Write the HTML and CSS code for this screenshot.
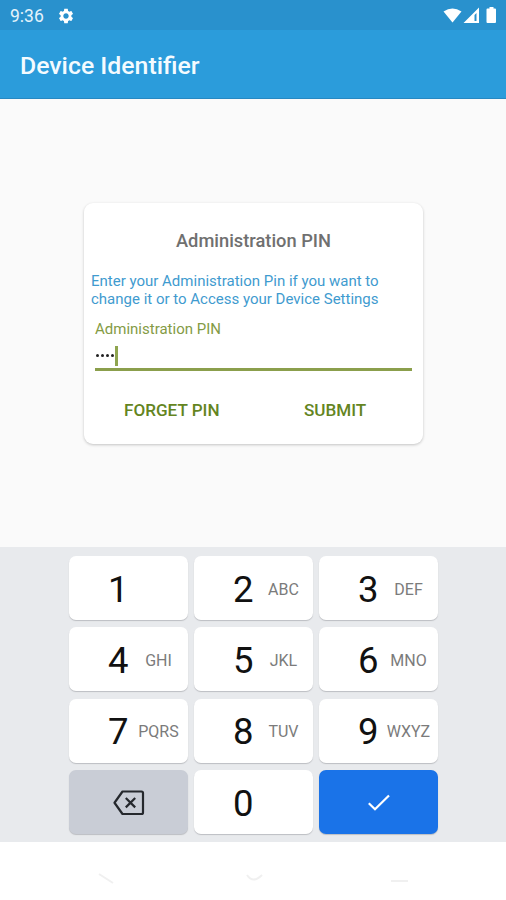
FILE: index.html
```html
<!DOCTYPE html>
<html lang="en">
<head>
<meta charset="utf-8">
<title>Device Identifier</title>
<link rel="stylesheet" href="styles.css">
</head>
<body>

<div class="statusbar">
	<span class="clock">9:36</span>
	<svg class="gear" width="18" height="18" viewBox="0 0 24 24"><path fill="#fff" d="M19.14 12.94c.04-.3.06-.61.06-.94 0-.32-.02-.64-.07-.94l2.03-1.58c.18-.14.23-.41.12-.61l-1.92-3.32c-.12-.22-.37-.29-.59-.22l-2.39.96c-.5-.38-1.03-.7-1.62-.94l-.36-2.54c-.04-.24-.24-.41-.48-.41h-3.84c-.24 0-.43.17-.47.41l-.36 2.54c-.59.24-1.13.57-1.62.94l-2.39-.96c-.22-.08-.47 0-.59.22L2.74 8.87c-.12.21-.08.47.12.61l2.03 1.58c-.05.3-.09.63-.09.94s.02.64.07.94l-2.03 1.58c-.18.14-.23.41-.12.61l1.92 3.32c.12.22.37.29.59.22l2.39-.96c.5.38 1.03.7 1.62.94l.36 2.54c.05.24.24.41.48.41h3.84c.24 0 .44-.17.47-.41l.36-2.54c.59-.24 1.13-.56 1.62-.94l2.39.96c.22.08.47 0 .59-.22l1.92-3.32c.12-.22.07-.47-.12-.61l-2.01-1.58zM12 15.6c-1.98 0-3.6-1.62-3.6-3.6s1.62-3.6 3.6-3.6 3.6 1.62 3.6 3.6-1.62 3.6-3.6 3.6z"/></svg>
	<svg class="signals" width="56" height="18" viewBox="0 0 56 18">
		<path fill="#fff" d="M0.5 4.500Q9.500-1.500 18.500 4.500L9.500 15.500z"/>
		<path fill="#fff" fill-rule="evenodd" d="M36 0.500V16H20.500zM31.500 8L33.500 6V14H31.500z"/>
		<path fill="#fff" d="M46.500 0h4v1.500h1.500q1 0 1 1V15q0 1-1 1h-7.500q-1 0-1-1V2.500q0-1 1-1h2z"/>
	</svg>
</div>

<div class="appbar">Device Identifier</div>

<div class="content">
	<div class="card">
		<div class="card-title">Administration PIN</div>
		<p class="message">Enter your Administration Pin if you want to<br>change it or to Access your Device Settings</p>
		<div class="field">
			<div class="label">Administration PIN</div>
			<div class="pin">
				<i class="dot"></i><i class="dot"></i><i class="dot"></i><i class="dot"></i><i class="cursor"></i>
			</div>
		</div>
		<div class="buttons">
			<span class="forget">FORGET PIN</span>
			<span class="submit">SUBMIT</span>
		</div>
	</div>
</div>

<div class="keyboard">
	<div class="key"><b>1</b></div>
	<div class="key"><b>2</b><span>ABC</span></div>
	<div class="key"><b>3</b><span>DEF</span></div>
	<div class="key"><b>4</b><span>GHI</span></div>
	<div class="key"><b>5</b><span>JKL</span></div>
	<div class="key"><b>6</b><span>MNO</span></div>
	<div class="key"><b>7</b><span>PQRS</span></div>
	<div class="key"><b>8</b><span>TUV</span></div>
	<div class="key"><b>9</b><span>WXYZ</span></div>
	<div class="key delete">
		<svg width="32" height="26" viewBox="0 0 32 26" fill="none" stroke="#25282d" stroke-width="2.200" stroke-linejoin="round"><path d="M9.500 1.500H28.500Q30 1.500 30 3V22.500Q30 24 28.500 24H9.500L1.500 12.750z"/><path d="M12.800 8l9.400 9.400M22.200 8l-9.400 9.400"/></svg>
	</div>
	<div class="key"><b>0</b></div>
	<div class="key enter">
		<svg width="24" height="18" viewBox="0 0 24 18" fill="none" stroke="#fff" stroke-width="2.200"><path d="M1.800 9.200L8 15.300L22 1.500"/></svg>
	</div>
</div>

<div class="navbar">
	<svg width="20" height="14" viewBox="0 0 20 14"><path d="M1 1L15 10" fill="none" stroke="#f0f0f0" stroke-width="2"/></svg>
	<svg width="20" height="14" viewBox="0 0 20 14"><path d="M3 2Q9 11 18 2" fill="none" stroke="#f0f0f0" stroke-width="2"/></svg>
	<svg width="20" height="14" viewBox="0 0 20 14"><path d="M1 8H18" fill="none" stroke="#f0f0f0" stroke-width="2"/></svg>
</div>

</body>
</html>
```
FILE: styles.css
```css
* {
	box-sizing: border-box;
}
body {
	margin: 0;
	width: 506px;
	height: 900px;
	overflow: hidden;
	background: #fff;
	font-family: Roboto, "Liberation Sans", sans-serif;
}

/* top bars */
.statusbar {
	height: 30px;
	padding: 1px 7px 0 10px;
	display: flex;
	align-items: center;
	background: #2991cd;
	color: #fff;
}
.clock {
	width: 47px;
	font-size: 17.5px;
	line-height: 30px;
	color: #e4f3fb;
}
.signals {
	margin-left: auto;
}
.appbar {
	height: 69px;
	padding-left: 20px;
	border-bottom: 1px solid #2788c2;
	background: #2b9cdb;
	color: #f4fbff;
	font-size: 24.8px;
	font-weight: 500;
	line-height: 72px;
}

/* pin card */
.content {
	height: 448px;
	padding: 104px 0 0 84px;
	background: #fafafa;
}
.card {
	width: 339px;
	height: 241px;
	border-radius: 9px;
	background: #fff;
	box-shadow: 0 1px 3px rgba(0,0,0,.22);
}
.card-title {
	padding-top: 26px;
	text-align: center;
	font-size: 18.3px;
	font-weight: 500;
	line-height: 24px;
	color: #707070;
}
.message {
	margin: 19px 0 0 7px;
	font-size: 15px;
	line-height: 18px;
	white-space: nowrap;
	color: #3f9bcf;
}
.field {
	margin: 11px 11px 0;
	border-bottom: 3px solid #8b9f4c;
}
.label {
	font-size: 15px;
	line-height: 20px;
	color: #849b45;
}
.pin {
	height: 29px;
	display: flex;
	align-items: center;
	gap: 2px;
	padding: 4px 0 0 1px;
}
.dot {
	width: 3px;
	height: 3px;
	border-radius: 50%;
	background: #222;
}
.cursor {
	width: 3px;
	height: 20px;
	margin-left: -1px;
	background: #8fa54f;
}
.buttons {
	display: flex;
	margin-top: 27px;
	font-size: 17.1px;
	font-weight: 500;
	line-height: 24px;
	color: #64851f;
}
.forget {
	width: 180px;
	margin-left: 40px;
}

/* keyboard */
.keyboard {
	height: 295px;
	padding: 9px 68px 0 69px;
	display: grid;
	grid-template-columns: repeat(3, 119px);
	grid-auto-rows: 64px;
	gap: 7.4px 6px;
	align-content: start;
	background: #e8eaed;
}
.key {
	display: grid;
	grid-template-columns: 60px 59px;
	align-items: center;
	border-radius: 7px;
	background: #fff;
	box-shadow: 0 1px 1px #bcbec2;
}
.key b {
	padding: 3px 0 0 39px;
	font-size: 36.5px;
	font-weight: 400;
	line-height: 60px;
	color: #111;
}
.key span {
	padding-top: 2px;
	text-align: center;
	font-size: 16px;
	color: #7b7b7b;
}
.delete, .enter {
	display: flex;
	justify-content: center;
	padding-top: 2px;
}
.delete {
	background: #c9cdd6;
}
.enter {
	background: #1a73e8;
}

.navbar {
	height: 58px;
	padding: 31px 96px 0 98px;
	display: flex;
	justify-content: space-between;
}
```
